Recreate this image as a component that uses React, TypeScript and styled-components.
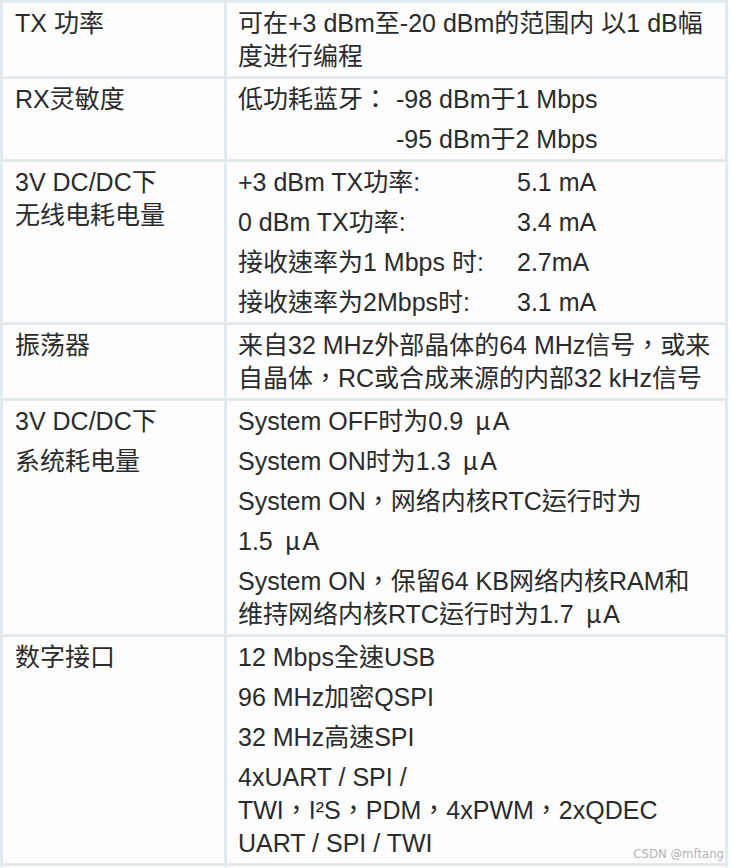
import React, { FC, ReactNode } from 'react';
import styled, { createGlobalStyle } from 'styled-components';

const GlobalStyle = createGlobalStyle`
  html, body {
    margin: 0;
    padding: 0;
    background: #ffffff;
    overflow: hidden;
  }
  body {
    font-family: 'Liberation Sans', Arial, 'Noto Sans CJK TC', sans-serif;
    color: #2b2b2b;
  }
`;

const lineHeight = 33;
const borderColor = '#e3eaed';

const Page = styled.div`
  position: relative;
  width: 733px;
  height: 868px;
  overflow: hidden;
`;

const Table = styled.div`
  display: grid;
  grid-template-columns: 221px 498px;
  gap: 3px;
  padding: 3px;
  width: 728px;
  box-sizing: border-box;
  background: ${borderColor};
`;

const Cell = styled.div<{ $side: 'label' | 'value' }>`
  background: #fdfdfd;
  padding: ${({ $side }) => ($side === 'label' ? '0 10px 0 12px' : '0 8px 0 11px')};
  font-size: 25px;
  line-height: ${lineHeight}px;
  min-height: 40px;
`;

const Para = styled.div`
  padding: 3.5px 0;
  white-space: nowrap;
`;

const KeyValue = styled.div<{ $key: string }>`
  display: grid;
  grid-template-columns: ${({ $key }) => $key} 1fr;
  row-gap: 7px;
  padding: 3.5px 0;
  white-space: nowrap;
`;

const Empty = styled.span``;

const Mu = styled.span`
  font-family: 'Noto Sans CJK TC', sans-serif;
  line-height: 0;
  margin: 0 2px 0 5px;
`;

const Watermark = styled.div`
  position: absolute;
  right: 9px;
  bottom: 7px;
  font-family: 'Liberation Sans Narrow', 'DejaVu Sans Condensed', sans-serif;
  font-size: 13px;
  color: #b4b4b4;
`;

const Row: FC<{ label: ReactNode; children: ReactNode }> = ({ label, children }) => (
  <>
    <Cell $side="label">{label}</Cell>
    <Cell $side="value">{children}</Cell>
  </>
);

const uA = (
  <>
    <Mu>μ</Mu>A
  </>
);

export default function App() {
  return (
    <Page>
      <GlobalStyle />
      <Table>
        <Row label={<Para>TX 功率</Para>}>
          <Para>
            可在+3 dBm至-20 dBm的范围内 以1 dB幅
            <br />
            度进行编程
          </Para>
        </Row>

        <Row label={<Para>RX灵敏度</Para>}>
          <KeyValue $key="158px">
            <span>低功耗蓝牙：</span>
            <span>-98 dBm于1 Mbps</span>
            <Empty />
            <span>-95 dBm于2 Mbps</span>
          </KeyValue>
        </Row>

        <Row
          label={
            <Para>
              3V DC/DC下
              <br />
              无线电耗电量
            </Para>
          }
        >
          <KeyValue $key="279px">
            <span>+3 dBm TX功率:</span>
            <span>5.1 mA</span>
            <span>0 dBm TX功率:</span>
            <span>3.4 mA</span>
            <span>接收速率为1 Mbps 时:</span>
            <span>2.7mA</span>
            <span>接收速率为2Mbps时:</span>
            <span>3.1 mA</span>
          </KeyValue>
        </Row>

        <Row label={<Para>振荡器</Para>}>
          <Para>
            来自32 MHz外部晶体的64 MHz信号，或来
            <br />
            自晶体，RC或合成来源的内部32 kHz信号
          </Para>
        </Row>

        <Row
          label={
            <>
              <Para>3V DC/DC下</Para>
              <Para>系统耗电量</Para>
            </>
          }
        >
          <Para>System OFF时为0.9 {uA}</Para>
          <Para>System ON时为1.3 {uA}</Para>
          <Para>System ON，网络内核RTC运行时为</Para>
          <Para>1.5 {uA}</Para>
          <Para>
            System ON，保留64 KB网络内核RAM和
            <br />
            维持网络内核RTC运行时为1.7 {uA}
          </Para>
        </Row>

        <Row label={<Para>数字接口</Para>}>
          <Para>12 Mbps全速USB</Para>
          <Para>96 MHz加密QSPI</Para>
          <Para>32 MHz高速SPI</Para>
          <Para>
            4xUART / SPI /
            <br />
            TWI，I²S，PDM，4xPWM，2xQDEC
            <br />
            UART / SPI / TWI
          </Para>
        </Row>

        <Row label={<Para>&nbsp;</Para>}>
          <Para>&nbsp;</Para>
        </Row>
      </Table>
      <Watermark>CSDN @mftang</Watermark>
    </Page>
  );
}
